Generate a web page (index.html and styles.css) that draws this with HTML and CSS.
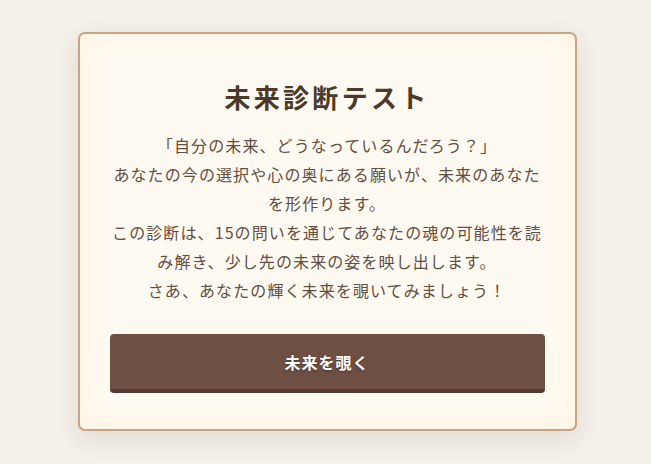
FILE: index.html
```html
<!DOCTYPE html>
<html lang="ja">
<head>
    <meta charset="UTF-8">
    <meta name="viewport" content="width=device-width, initial-scale=1.0">
    <title>未来診断テスト</title>
    <link rel="stylesheet" href="styles.css">
</head>
<body>
    <div class="card">
        <h1 class="title">未来診断テスト</h1>
        <p class="intro">
            「自分の未来、どうなっているんだろう？」<br>
            あなたの今の選択や心の奥にある願いが、未来のあなたを形作ります。<br>
            この診断は、15の問いを通じてあなたの魂の可能性を読み解き、少し先の未来の姿を映し出します。<br>
            さあ、あなたの輝く未来を覗いてみましょう！
        </p>
        <button class="start-btn" type="button">未来を覗く</button>
    </div>
</body>
</html>
```

FILE: styles.css
```css
html{
    background: #f4f0ea;
}
body{
    margin: 0;
    min-height: 464px;
    font-family: "Noto Sans CJK JP", "Noto Sans", sans-serif;
    display: flex;
    justify-content: center;
    align-items: flex-start;
    padding-top: 32px;
    box-sizing: border-box;
}
.card {
    width: 435px;
    padding: 47px 30px 36px;
    background: #fffaf1;
    border: 2px solid #c8a582;
    border-radius: 7px;
    box-shadow: 0 8px 24px rgba(80, 60, 30, 0.12), inset 0 0 24px rgba(245, 225, 190, 0.35);
    margin-left: 3px;
}
.title {
    margin: 0 0 19px;
    text-align: center;
    font-size: 26px;
    line-height: 31px;
    font-weight: 700;
    letter-spacing: 3.3px;
    color: #4b3a29;
}
.intro {
    margin: 0 0 29px;
    text-align: center;
    font-size: 16px;
    line-height: 29px;
    letter-spacing: 1.1px;
    color: #5f4e42;
}
.start-btn {
    display: block;
    width: 100%;
    height: 59px;
    border: none;
    border-bottom: 4px solid #523a32;
    border-radius: 4px;
    background: #6d4f43;
    color: #fff;
    font-family: inherit;
    font-size: 16px;
    font-weight: 700;
    letter-spacing: 1px;
    text-shadow: 0 1px 2px rgba(0, 0, 0, 0.35);
    cursor: pointer;
}
```
